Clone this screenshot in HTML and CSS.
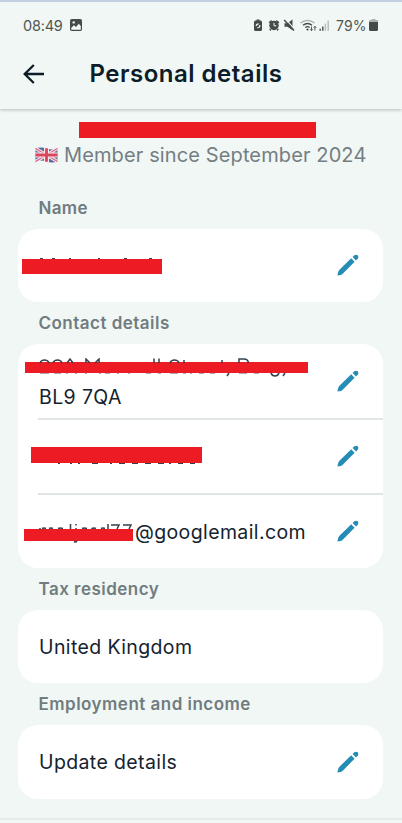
FILE: index.html
```html
<!DOCTYPE html>
<html lang="en">
<head>
<meta charset="utf-8">
<title>Personal details</title>
<link rel="stylesheet" href="styles.css">
</head>
<body>
<svg width="0" height="0" class="defs">
  <symbol id="pencil" viewBox="0 0 22 22">
    <path d="M.4 21.600 1.100 18.200Q1.500 16.700 2.700 15.500L14.200 4.300 17.600 7.700 6.500 18.900Q5.200 20.300 3.800 20.900Z"/>
    <path d="M15.600 3 17.300 1.300Q19 .1 20.700 1.300 22 2.900 20.900 4.500L19 6.400Z"/>
  </symbol>
</svg>
<header class="header">
  <div class="status">
    <span class="time">08:49</span>
    <svg class="photo" viewBox="0 0 12 12"><rect width="12" height="12" rx="1.8" fill="#454b48"/><circle cx="3.7" cy="3.4" r="1.2" fill="#f0f7f4"/><path d="M1.3 8.8 4 6.3l2 1.6 2.8-3.2 2 2.2v3.8H1.3z" fill="#f0f7f4"/></svg>
    <svg class="indicators" viewBox="0 0 78 14">
      <g fill="#454b48">
        <path d="M2.500 2.500h1V1.500h3v1h1Q9 2.500 9 4v7.500Q9 13 7.500 13h-5Q1 13 1 11.500V4q0-1.500 1.500-1.500z"/>
        <circle cx="21" cy="7.500" r="4.700"/><path d="m15.600 4.200 2.600-2.200 1 1.200-2.600 2.200zM26.400 4.200l-2.600-2.200-1 1.200 2.600 2.200zM17 10.500l1.500 1.200-1 1.200L16.200 11.500zM25 10.500l-1.500 1.200 1 1.200L25.800 11.500z"/>
        <path d="M31.500 5.300h3L39.500 1.500v10.800l-5-3.600h-3z"/>
      </g>
      <path d="m32.500 1.200 9.500 10.500" stroke="#f0f7f4" stroke-width="1.200"/>
      <path d="m31.200 2 9.800 10.500" stroke="#454b48" stroke-width="1.500"/>
      <path d="M3.200 8q0-2 2.500-2.200M6.800 7q.5 2.500-2.400 2.700" fill="none" stroke="#f0f7f4" stroke-width="1.200"/>
      <path d="M21 4.900V7.800h2.300" fill="none" stroke="#f0f7f4"/>
      <path d="M47.500 5.100Q54.500-.5 61.500 5.100" fill="none" stroke="#a9b0ad" stroke-width="1.300"/>
      <path d="M50 7.300q4.500-3.600 9 0M52.200 9.500q2.300-1.700 4.500 0" fill="none" stroke="#454b48" stroke-width="1.400"/>
      <circle cx="54.500" cy="11.500" r="1.100" fill="#454b48"/>
      <path d="M58.500 8.500v4M57.200 11.300l1.300 1.400 1.300-1.400M61.900 12.500V8.300M60.600 9.700l1.300-1.400 1.300 1.400" fill="none" stroke="#454b48" stroke-width=".9"/>
      <path d="M67.200 12.800V10.800M69.800 12.800V8.500" stroke="#454b48" stroke-width="1.400"/>
      <path d="M72.400 12.800V5.500M75.200 12.800V2.500" stroke="#b7bebb" stroke-width="1.500"/>
    </svg>
    <span class="percent">79%</span>
    <svg class="battery" viewBox="0 0 9 12"><path d="M2.500 1V0h4v1H8q1 0 1 1v1H0V2q0-1 1-1z" fill="#a9b0ad"/><path d="M0 3h9v7.500Q9 12 7.500 12h-6Q0 12 0 10.500z" fill="#454b48"/></svg>
  </div>
  <div class="bar">
    <svg class="back" viewBox="0 0 22 20"><path d="M21 10H2M10.800 1 1.700 10l9.100 9" fill="none" stroke="#0c1c28" stroke-width="2.300"/></svg>
    <h1>Personal details</h1>
  </div>
</header>
<main>
  <section class="summary">
    <div class="mask mask-title"></div>
    <div class="member">
      <svg class="flag" viewBox="0 0 22 16">
        <path d="M0 1.500Q5-.500 11 1.500t11 0v13q-5 2-11 0t-11 0z" fill="#5968a0"/>
        <path d="m0 1.500 22 13M22 1.500l-22 13" stroke="#f4e8ee" stroke-width="3.200"/>
        <path d="m0 1.500 22 13M22 1.500l-22 13" stroke="#dc6478" stroke-width="1.200"/>
        <path d="M11 1v14M0 8h22" stroke="#f8eef2" stroke-width="5"/>
        <path d="M11 1.300v13.400M0 8h22" stroke="#d9455b" stroke-width="2.800"/>
      </svg>
      <span>Member since September 2024</span>
    </div>
  </section>

  <h2 class="short">Name</h2>
  <section class="card">
    <div class="row">
      <div class="value">
        <svg class="ink ink-name" viewBox="0 0 140 4"><path d="M18 3.500h3M30 3.500h3M47 3.500h2M76 3.500h2M102 3.500h3M127 3.500h3" stroke="#33424c" stroke-width="1"/></svg>
        <div class="mask mask-name"></div>
      </div>
      <svg class="edit"><use href="#pencil"/></svg>
    </div>
  </section>

  <h2>Contact details</h2>
  <section class="card">
    <div class="row">
      <div class="value address">
        <svg class="ink ink-address" viewBox="0 0 283 24" fill="none" stroke="#33424c" stroke-width="1.500">
          <path d="M15 5q1-3 4.500-3T24 5M28 5q1-3 4.500-3T37 5M42 5l3-4 3 4M61 5V1l4 4M70 5l4-4v4M129 5V.5M134 5V.5M145 5q1-3 4.500-3T154 5M159 5V2M197 5V2M214 5V1h5q4 0 4.500 4"/>
          <path stroke="#a5abb0" stroke-width="1" d="M15 15.500h9M29 15.500h7M41 15.500h2M50 15.500h2M60 15.500h2M74 15.500h2M80 15.500h5M92 15.500h2M103 15.500h2M121 15.500h5M133 15.500h3M145 15.500h8M158 15.500h3M165 15.500h2M174 15.500h5M185 15.500h5M214 15.500h8M229 15.500h5"/>
          <path d="m204 15-2 3M246 15q1 3 4 3t4-3M260 15l-2 3"/>
        </svg>
        <div class="mask mask-address"></div>
        <span>BL9 7QA</span>
      </div>
      <svg class="edit"><use href="#pencil"/></svg>
    </div>
    <div class="row">
      <div class="value">
        <svg class="ink ink-phone" viewBox="0 0 171 4"><path d="M27 .5h2M39 .5h2M47 .5h2M61 .5h6M79 .5h2M88 .5h6M101 .5h6M114 .5h6M127 .5h6M138 .5h2M147 .5h5M159 .5h5" stroke="#33424c" stroke-width="1"/></svg>
        <div class="mask mask-phone"></div>
      </div>
      <svg class="edit"><use href="#pencil"/></svg>
    </div>
    <div class="row">
      <div class="value email">
        <svg class="ink ink-email" viewBox="0 0 109 20" fill="none" stroke="#33424c" stroke-width="1.500">
          <path d="M16 5.500V4M18 4.500q2-1 4 0M25 4.500q2-1 4 0M34 4.500q2-1 5 0M46.500 5V0M52 0v1.500M52 5V4M58 4.500q2-1 5 0M68 5V4.500q2-1 4 0M77 4.500q2-1 4 0M84 5V0M87 1h8l-2 4M99 1h8l-2 4M50 17.500q2 1 3-.5"/>
        </svg>
        <div class="mask mask-email"></div>
        <span>@googlemail.com</span>
      </div>
      <svg class="edit"><use href="#pencil"/></svg>
    </div>
  </section>

  <h2>Tax residency</h2>
  <section class="card">
    <div class="row"><div class="value"><span class="country">United Kingdom</span></div></div>
  </section>

  <h2>Employment and income</h2>
  <section class="card last">
    <div class="row">
      <div class="value"><span class="update">Update details</span></div>
      <svg class="edit"><use href="#pencil"/></svg>
    </div>
  </section>
</main>
<footer></footer>
</body>
</html>
```
FILE: styles.css
```css
* { box-sizing: border-box; }
body {
  margin: 0;
  height: 823px;
  overflow: hidden;
  background: #f0f7f4;
  color: #14232e;
  font-family: Inter, "Liberation Sans", sans-serif;
}
svg { display: block; flex: none; }
.defs { position: absolute; }
.header {
  height: 109px;
  border-top: 2px solid #c5cfe3;
  box-shadow: 0 1px 3px rgba(30, 50, 45, .28);
}
.status {
  display: flex;
  align-items: center;
  height: 46px;
  padding-left: 23px;
  color: #505653;
  font-size: 14.5px;
}
.time { width: 47px; letter-spacing: -.2px; }
.photo { width: 12px; height: 12px; }
.indicators { width: 78px; height: 14px; margin-left: 171px; }
.percent { width: 32px; margin-left: 5px; font-size: 14px; letter-spacing: .1px; white-space: nowrap; }
.battery { width: 9px; height: 12px; margin-left: 1px; }
.bar { display: flex; align-items: center; height: 51px; padding-left: 23px; }
.back { width: 22px; height: 20px; }
h1 { margin: 0 0 0 44.5px; color: #0c1c28; font-size: 24px; font-weight: 600; line-height: 30px; letter-spacing: .5px; white-space: nowrap; }
.summary { height: 78px; padding-top: 13px; }
.mask { background: #ed1c24; }
.mask-title { width: 237px; height: 16px; margin-left: 79px; }
.member {
  display: flex;
  align-items: center;
  height: 24px;
  margin: 5px 0 0 35px;
  color: #747e83;
  font-size: 20px;
  letter-spacing: .12px;
  white-space: nowrap;
}
.flag { width: 23px; height: 16px; margin-right: 6px; }
h2 { margin: 0; padding-left: 38.5px; color: #717c80; font-size: 17px; font-weight: 600; line-height: 42px; letter-spacing: .48px; white-space: nowrap; }
h2.short { letter-spacing: .3px; }
.card { width: 365px; margin-left: 18px; border-radius: 20px; background: #fff; }
.row { display: flex; align-items: center; height: 73px; padding: 0 24.5px 0 21px; }
.row + .row { height: 75px; margin-left: 20px; padding-left: 1px; border-top: 2px solid #e0e5e5; }
.row:not(:only-child):first-child { height: 74px; }
.row + .row:last-child { height: 75px; }
.last .row { height: 74px; }
.value { position: relative; flex: 1; font-size: 19.5px; line-height: 24px; letter-spacing: .38px; white-space: nowrap; }
.edit { width: 22px; height: 22px; margin-bottom: 1px; fill: #258db5; }
.ink { position: absolute; }
.mask-name { width: 140px; height: 15px; margin: 2px 0 0 -17px; }
.ink-name { width: 140px; height: 4px; left: -17px; top: -2px; }
.address { display: flex; flex-direction: column; padding-top: 9px; }
.mask-address { width: 283px; height: 11px; margin: 0 0 12px -14px; }
.ink-address { width: 283px; height: 24px; left: -14px; top: 5px; }
.mask-phone { width: 171px; height: 16px; margin: -3px 0 0 -8px; }
.ink-phone { width: 171px; height: 4px; left: -8px; top: 13px; }
.email { display: flex; align-items: center; }
.mask-email { width: 109px; height: 12px; margin: 7px 2px 0 -15px; }
.ink-email { width: 109px; height: 20px; left: -15px; top: 4px; }
footer { height: 5px; margin-top: 19px; border-top: 2px solid #e5ebe9; }
```
